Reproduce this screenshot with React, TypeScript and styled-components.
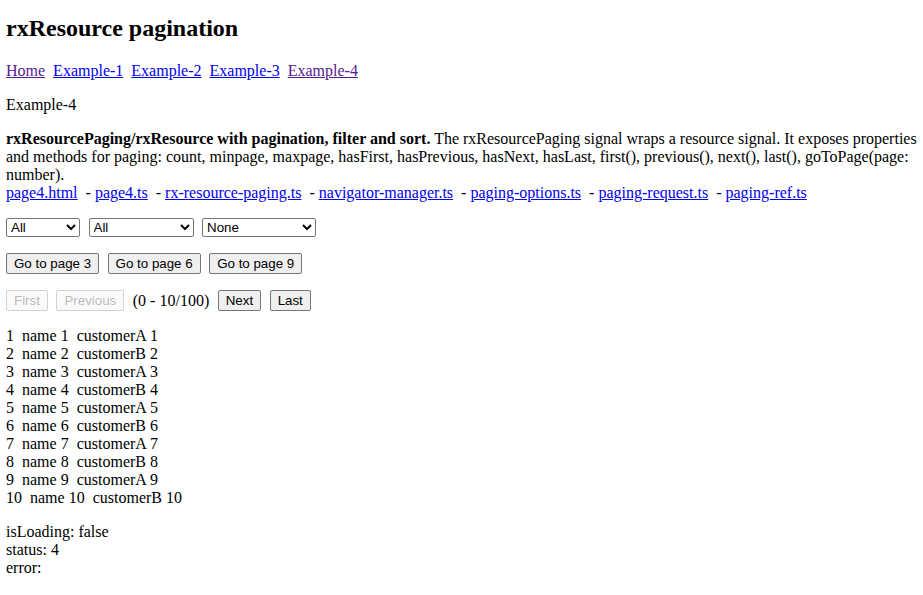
import styled, { createGlobalStyle } from "styled-components";

const GlobalStyle = createGlobalStyle`
  html, body {
    margin: 0;
    padding: 0;
    background: #ffffff;
  }
  body {
    font-family: "Liberation Serif", "Times New Roman", serif;
    font-size: 16px;
    line-height: 18px;
    color: #000000;
  }
`;

const Page = styled.div`
  padding: 14px 4px 0 6px;
`;

const Title = styled.h1`
  font-size: 24px;
  line-height: 28px;
  font-weight: bold;
  margin: 0 0 20px;
`;

const Nav = styled.nav`
  margin: 0 0 16px;
`;

const Link = styled.a<{ $visited?: boolean }>`
  color: ${(p) => (p.$visited ? "#551a8b" : "#0000ee")};
  text-decoration: underline;
  cursor: pointer;
`;

const Block = styled.p`
  margin: 0 0 16px;
`;

const Controls = styled.div`
  display: flex;
  align-items: center;
  gap: 8.5px;
  margin: 0 0 16px;
`;

const Select = styled.select<{ $w: number }>`
  width: ${(p) => p.$w}px;
  height: 19px;
  font-family: "Liberation Sans", Arial, sans-serif;
  font-size: 13.33px;
  border: 1px solid #767676;
  border-radius: 2px;
  background: #ffffff;
  color: #000000;
  padding: 0;
  margin: 0;
`;

const Button = styled.button`
  font-family: "Liberation Sans", Arial, sans-serif;
  font-size: 13.33px;
  line-height: 15px;
  height: 21px;
  padding: 1px 7px;
  margin: 0;
  background: #efefef;
  color: #000000;
  border: 1px solid #767676;
  border-radius: 2px;

  &:disabled {
    background: rgba(239, 239, 239, 0.3);
    color: rgba(16, 16, 16, 0.3);
    border-color: rgba(118, 118, 118, 0.3);
  }
`;

const Range = styled.span`
  font-size: 16px;
`;

const List = styled.div`
  margin: 0 0 16px;
`;

const Row = styled.div`
  display: flex;
  gap: 8px;
`;

const Status = styled.div``;

const files = [
  "page4.html",
  "page4.ts",
  "rx-resource-paging.ts",
  "navigator-manager.ts",
  "paging-options.ts",
  "paging-request.ts",
  "paging-ref.ts",
];

const rows = Array.from({ length: 10 }, (_, i) => ({
  id: i + 1,
  name: `name ${i + 1}`,
  customer: `customer${i % 2 === 0 ? "A" : "B"} ${i + 1}`,
}));

function App() {
  return (
    <>
      <GlobalStyle />
      <Page>
        <Title>rxResource pagination</Title>
        <Nav>
          <Link $visited>Home</Link>
          {"\u00a0 "}
          <Link>Example-1</Link>
          {"\u00a0 "}
          <Link>Example-2</Link>
          {"\u00a0 "}
          <Link>Example-3</Link>
          {"\u00a0 "}
          <Link $visited>Example-4</Link>
        </Nav>
        <Block>Example-4</Block>
        <Block>
          <b>rxResourcePaging/rxResource with pagination, filter and sort.</b> The rxResourcePaging signal
          wraps a resource signal. It exposes properties and methods for paging: count, minpage, maxpage,
          hasFirst, hasPrevious, hasNext, hasLast, first(), previous(), next(), last(), goToPage(page: number).
          <br />
          {files.map((f, i) => (
            <span key={f}>
              {i > 0 && "\u00a0 - "}
              <Link>{f}</Link>
            </span>
          ))}
        </Block>
        <Controls>
          <Select $w={74} defaultValue="all">
            <option value="all">All</option>
            <option value="a">customerA</option>
            <option value="b">customerB</option>
          </Select>
          <Select $w={105} defaultValue="all">
            <option value="all">All</option>
            <option value="odd">Odd names</option>
            <option value="even">Even names</option>
          </Select>
          <Select $w={114} defaultValue="none">
            <option value="none">None</option>
            <option value="asc">Name ascending</option>
            <option value="desc">Name descending</option>
          </Select>
        </Controls>
        <Controls>
          <Button>Go to page 3</Button>
          <Button>Go to page 6</Button>
          <Button>Go to page 9</Button>
        </Controls>
        <Controls>
          <Button disabled>First</Button>
          <Button disabled>Previous</Button>
          <Range>(0 - 10/100)</Range>
          <Button>Next</Button>
          <Button>Last</Button>
        </Controls>
        <List>
          {rows.map((r) => (
            <Row key={r.id}>
              <span>{r.id}</span>
              <span>{r.name}</span>
              <span>{r.customer}</span>
            </Row>
          ))}
        </List>
        <Status>isLoading: false</Status>
        <Status>status: 4</Status>
        <Status>error: </Status>
      </Page>
    </>
  );
}

export default App;
